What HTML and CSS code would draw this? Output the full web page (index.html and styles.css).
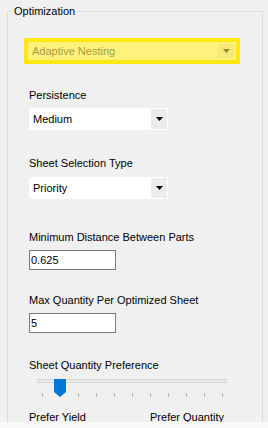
FILE: index.html
```html
<!DOCTYPE html>
<html>
  <head>
    <title>Optimization</title>
    <link rel="stylesheet" href="styles.css">
  </head>
  <body>
    <div class="panel">
      <fieldset class="group">
        <legend>Optimization</legend>
        <div class="fields">
          <div class="highlight">
            <div class="combo combo-hl">
              <span class="combo-text">Adaptive Nesting</span>
              <span class="combo-btn">
                <svg width="7" height="4" viewBox="0 0 7 4"><polygon points="0,0 7,0 3.5,4" fill="#8f8a2c"/></svg>
              </span>
            </div>
          </div>

          <div class="field" id="persistence">
            <div class="lbl">Persistence</div>
            <div class="combo">
              <span class="combo-text">Medium</span>
              <span class="combo-btn">
                <svg width="7" height="4" viewBox="0 0 7 4"><polygon points="0,0 7,0 3.5,4" fill="#000"/></svg>
              </span>
            </div>
          </div>

          <div class="field" id="selection">
            <div class="lbl">Sheet Selection Type</div>
            <div class="combo">
              <span class="combo-text">Priority</span>
              <span class="combo-btn">
                <svg width="7" height="4" viewBox="0 0 7 4"><polygon points="0,0 7,0 3.5,4" fill="#000"/></svg>
              </span>
            </div>
          </div>

          <div class="field" id="mindist">
            <div class="lbl">Minimum Distance Between Parts</div>
            <div class="textbox">0.625</div>
          </div>

          <div class="field" id="maxqty">
            <div class="lbl">Max Quantity Per Optimized Sheet</div>
            <div class="textbox">5</div>
          </div>

          <div class="field" id="preference">
            <div class="lbl">Sheet Quantity Preference</div>
            <div class="slider">
              <div class="track"></div>
              <svg class="thumb" width="12" height="18" viewBox="0 0 12 18"><polygon points="0,0 12,0 12,13 6,18 0,13" fill="#0078d7"/></svg>
              <div class="ticks">
                <span></span><span></span><span></span><span></span><span></span><span></span>
                <span></span><span></span><span></span><span></span><span></span>
              </div>
            </div>
            <div class="ends">
              <span>Prefer Yield</span>
              <span>Prefer Quantity</span>
            </div>
          </div>
        </div>
      </fieldset>
    </div>
    <div class="strip"></div>
  </body>
</html>
```

FILE: styles.css
```css
body{
	margin:0;
	background:#f0f0f0;
	font-family:"Liberation Sans", Arial, sans-serif;
	font-size:11px;
	color:#000000;
}

.panel{
	height:422px;
	overflow:hidden;
}

.strip{
	height:6px;
	background:#fafafa;
}

.group{
	box-sizing:border-box;
	width:256px;
	height:440px;
	margin:4px 0 0 7px;
	padding:0;
	border:1px solid #dcdcdc;
	min-width:0;
}

.group legend{
	margin-left:4px;
	padding:0 2px;
	line-height:15px;
}

.fields{
	padding-left:21px;
}

.lbl{
	line-height:14px;
	white-space:nowrap;
}

/* highlighted (disabled) combo */
.highlight{
	box-sizing:border-box;
	width:216px;
	height:26px;
	margin:19px 0 0 -5px;
	border:4px solid #ffe714;
	background:#fff27c;
}

.combo{
	display:flex;
	align-items:center;
	box-sizing:border-box;
	width:139px;
	height:22px;
	border:1px solid #ffffff;
	background:#ffffff;
	margin-top:6px;
}

.combo-text{
	flex:1;
	padding-left:3px;
	white-space:nowrap;
}

.combo-btn{
	display:flex;
	align-items:center;
	justify-content:center;
	width:16px;
	height:20px;
	background:#ececec;
}

.combo-hl{
	width:208px;
	height:18px;
	margin:0;
	border-color:#fff27c;
	background:#fff27c;
	color:#a39d3e;
}

.combo-hl .combo-btn{
	height:14px;
	margin-right:1px;
	background:#f6e977;
}

.textbox{
	box-sizing:border-box;
	width:87px;
	height:20px;
	margin-top:6px;
	padding-left:1px;
	border:1px solid #7a7a7a;
	background:#ffffff;
	line-height:18px;
}

#persistence{ margin-top:24px; }
#selection{ margin-top:26px; }
#selection .combo{ margin-top:7px; }
#mindist{ margin-top:31px; }
#maxqty{ margin-top:23px; }
#preference{ margin-top:25px; }

.slider{
	position:relative;
	width:200px;
	height:25px;
	margin-top:7px;
}

.track{
	box-sizing:border-box;
	width:190px;
	height:4px;
	margin:6px 0 0 8px;
	background:#e7e7e7;
	border:1px solid #d6d6d6;
}

.thumb{
	position:absolute;
	left:25px;
	top:0;
}

.ticks{
	display:flex;
	gap:17px;
	margin:10px 0 0 13px;
}

.ticks span{
	width:1px;
	height:4px;
	background:#b0b0b0;
}

.ends{
	display:flex;
	justify-content:space-between;
	width:195px;
	margin-top:6px;
	line-height:14px;
}
```
